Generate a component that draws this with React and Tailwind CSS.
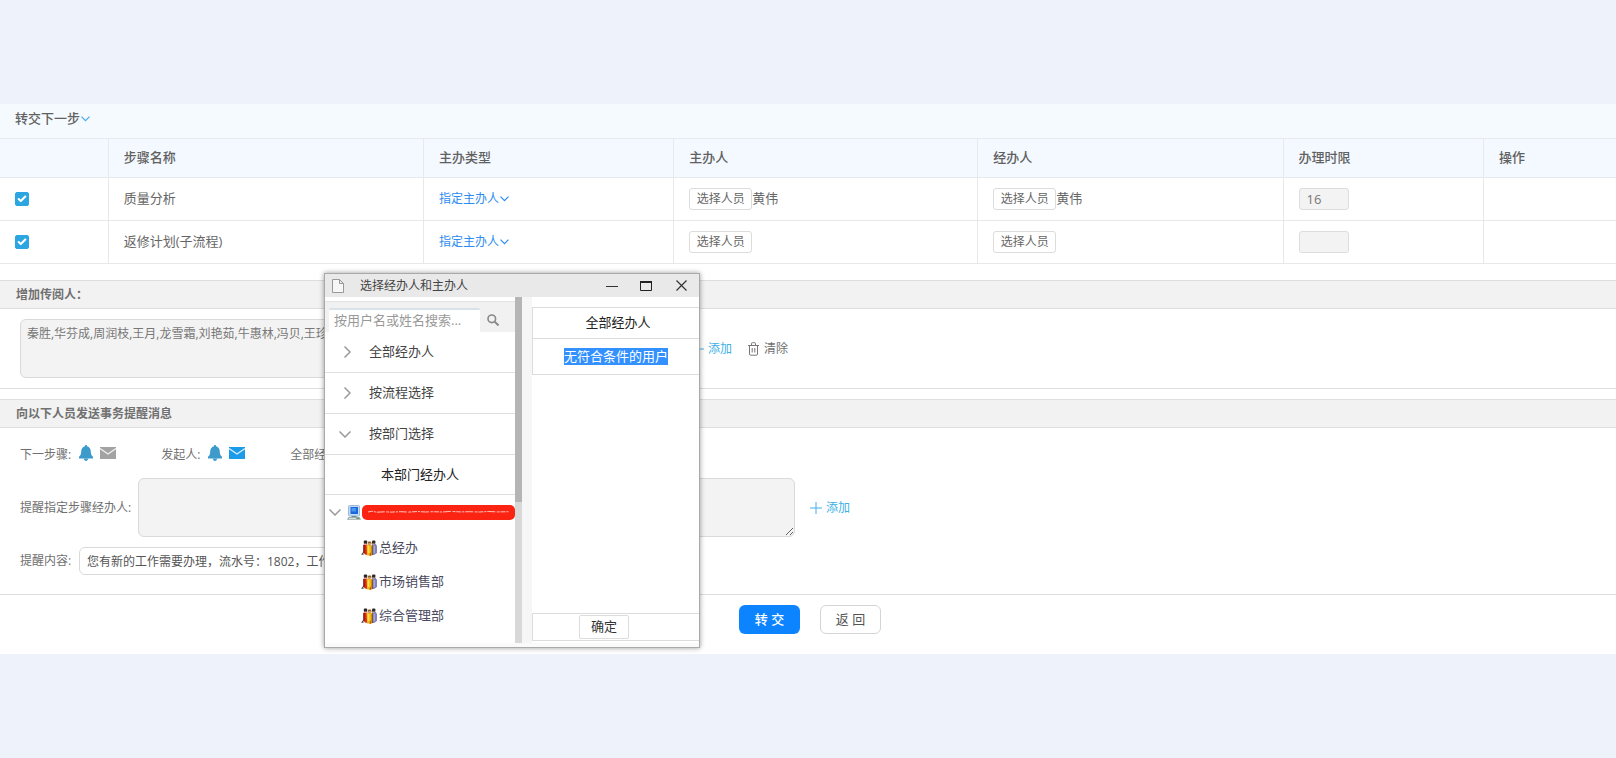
import React, { useState } from 'react'
import { Check } from 'lucide-react'

const STEPS = [
    { id: 1, name: '质量分析', host: '黄伟', handler: '黄伟', limit: '16' },
    { id: 2, name: '返修计划(子流程)', host: '', handler: '', limit: '' }
]

const READERS = '秦胜,华芬成,周润枝,王月,龙雪霜,刘艳茹,牛惠林,冯贝,王珍珍'

const DEPARTMENTS = ['总经办', '市场销售部', '综合管理部']

function CaretIcon() {
    return (
        <svg className="w-[9px] h-[6px] shrink-0" viewBox="0 0 9 6" fill="none" stroke="currentColor" strokeWidth="1.2">
            <path d="M.5.7l4 4 4-4" />
        </svg>
    )
}

function TreeArrow({ open }) {
    return open ? (
        <svg className="w-3 h-[7px] shrink-0" viewBox="0 0 12 7" fill="none" stroke="#999" strokeWidth="1.5">
            <path d="M.5.5l5.500 5.500 5.500-5.500" />
        </svg>
    ) : (
        <svg className="w-[7px] h-3 shrink-0" viewBox="0 0 7 12" fill="none" stroke="#999" strokeWidth="1.5">
            <path d="M.5.5l5.500 5.500-5.500 5.500" />
        </svg>
    )
}

function PlusIcon() {
    return (
        <svg className="w-3 h-3" viewBox="0 0 12 12" fill="none" stroke="currentColor">
            <path d="M0 6h12M6 0v12" />
        </svg>
    )
}

function SearchIcon() {
    return (
        <svg className="w-3 h-3" viewBox="0 0 12 12" fill="none" stroke="#888">
            <circle cx="4.800" cy="4.800" r="3.800" strokeWidth="1.600" />
            <path d="M7.600 7.600l3.900 3.900" strokeWidth="2" />
        </svg>
    )
}

function BellIcon() {
    return (
        <svg className="w-[14px] h-[16px]" viewBox="0 0 14 16" fill="#3d9bcb">
            <path d="M7 0c.7 0 1.100.5 1.100 1.200C10.600 1.900 11.700 4 11.800 6.500c.1 2.600.5 3.900 2.200 5.300v1.700H0v-1.700c1.700-1.400 2.100-2.700 2.200-5.300C2.300 4 3.400 1.900 5.900 1.200 5.900.5 6.300 0 7 0z" />
            <path d="M4.800 13.500h4.400c-.2 1.500-1 2.500-2.200 2.500s-2-1-2.200-2.500z" />
        </svg>
    )
}

function MailIcon({ color }) {
    return (
        <svg className="w-4 h-3" viewBox="0 0 16 12">
            <rect width="16" height="12" fill={color} />
            <path d="M0 1.500l8 5.500 8-5.500" fill="none" stroke="#fff" strokeOpacity=".85" strokeWidth="1.300" />
        </svg>
    )
}

function TrashIcon() {
    return (
        <svg className="w-[11px] h-[14px]" viewBox="0 0 11 14" fill="none" stroke="#777" strokeWidth="1">
            <path d="M0 3.500h11M3.500 3.500v-2q0-.8.8-.8h2.400q.8 0 .8.800v2M1.500 3.500v8.500q0 1.200 1.200 1.200h5.600q1.200 0 1.200-1.200V3.500M4.200 6v4.500M6.800 6v4.500" />
        </svg>
    )
}

function FileIcon() {
    return (
        <svg className="w-3 h-[14px]" viewBox="0 0 12 14" fill="#f7f7f7" stroke="#999" strokeWidth="1">
            <path d="M.5.5h7l4 4v9H.5zM7.500.5v4h4" />
        </svg>
    )
}

function ComputerIcon() {
    return (
        <svg className="w-[14px] h-[15px] shrink-0" viewBox="0 0 14 15">
            <rect x="1.500" y=".5" width="11" height="10.500" rx="1" fill="#c3dcf3" stroke="#9db9d6" />
            <rect x="3.500" y="2" width="7.500" height="7" fill="#1c66dc" />
            <path d="M4.500 3h4.500v3.500H4.500z" fill="#4a98f0" />
            <path d="M4.500 11h5v1.200h-5z" fill="#6f8797" />
            <path d="M1.500 12h11l1.500 2.800H0z" fill="#93a6a4" />
            <path d="M2 13.400h7" stroke="#e3ece8" />
            <path d="M10 13.400h2" stroke="#5aa04f" />
        </svg>
    )
}

function PeopleIcon() {
    return (
        <svg className="w-4 h-4 shrink-0" viewBox="0 0 16 16">
            <path d="M0 14.500l2.500-3V15z" fill="#555" />
            <path d="M2.500 4.500h4V15L4 14.500l-1.500-2z" fill="#d8261c" />
            <path d="M2.900 5v8" stroke="#5c100c" />
            <path d="M11 4h3.800l1.200 2v7L13 15h-2z" fill="#8480bd" />
            <path d="M13.200 6v7" stroke="#b9b5e6" />
            <path d="M5.500 5h6V15.500H6z" fill="#f9b514" />
            <path d="M7.500 6v7" stroke="#ffe44d" strokeWidth="1.500" />
            <path d="M8.500 16l.8-4 .9 3.500z" fill="#a8500f" />
            <path d="M11.200 5.500v9.500" stroke="#5b3a1c" />
            <rect x="2.800" y=".5" width="3.400" height="3.500" rx="1" fill="#2e2320" />
            <rect x="11" y=".5" width="3.400" height="3.500" rx="1" fill="#2e2a2a" />
            <rect x="6.800" y="1.500" width="3.600" height="3.500" rx="1.400" fill="#8c5a24" />
            <path d="M7.300 4h2.600" stroke="#f4c79b" strokeWidth="1.200" />
            <path d="M3.500 4h2M11.700 4h2" stroke="#e0b088" />
        </svg>
    )
}

function PickButton() {
    return (
        <button className="h-[22px] w-[63px] border border-[#dcdcdc] rounded-[3px] bg-white text-xs text-[#666]">
            选择人员
        </button>
    )
}

function AddButton() {
    return (
        <button className="flex items-center gap-1 ml-[15px] text-xs text-[#3db0e8]">
            <PlusIcon />
            添加
        </button>
    )
}

function SectionHeader({ children }) {
    return (
        <h2 className="h-[29px] flex items-center px-4 bg-[#f2f2f2] border-y border-[#dedede] text-xs font-bold text-[#707070]">
            {children}
        </h2>
    )
}

function RemindTarget({ label, mailColor }) {
    return (
        <div className="flex items-center gap-2">
            <span className="whitespace-nowrap">{label}</span>
            <span className="flex items-center gap-[7px] pb-1">
                <BellIcon />
                <MailIcon color={mailColor} />
            </span>
        </div>
    )
}

function StepTable() {
    const [checked, setChecked] = useState({ 1: true, 2: true })

    return (
        <table className="w-full table-fixed border-collapse text-[13px] text-[#666]">
            <colgroup>
                <col className="w-[6.7%]" />
                <col className="w-[19.5%]" />
                <col className="w-[15.5%]" />
                <col className="w-[18.8%]" />
                <col className="w-[18.9%]" />
                <col className="w-[12.4%]" />
                <col />
            </colgroup>
            <thead>
                <tr className="h-[39px] bg-[#f4f9ff] text-left border-y border-[#e6eaee]">
                    <th />
                    {['步骤名称', '主办类型', '主办人', '经办人', '办理时限', '操作'].map((title) => (
                        <th key={title} className="px-[15px] font-medium text-[#606060] border-l border-[#e6eaee]">{title}</th>
                    ))}
                </tr>
            </thead>
            <tbody>
                {STEPS.map((step) => (
                    <tr key={step.id} className="h-[43px] border-b border-[#e8e8e8]">
                        <td className="px-[15px]">
                            <label className="relative block w-[14px] h-[14px]">
                                <input
                                    type="checkbox"
                                    aria-label={step.name}
                                    className="appearance-none block w-[14px] h-[14px] rounded-[2px] border border-[#2ba6e0] checked:bg-[#2ba6e0]"
                                    checked={checked[step.id]}
                                    onChange={(e) => setChecked({ ...checked, [step.id]: e.target.checked })}
                                />
                                <Check className="absolute inset-0 m-auto w-[10px] h-[10px] text-white pointer-events-none" strokeWidth={5} />
                            </label>
                        </td>
                        <td className="px-[15px] border-l border-[#e8e8e8]">{step.name}</td>
                        <td className="px-[15px] border-l border-[#e8e8e8]">
                            <button className="flex items-center gap-px text-xs text-[#2d8cf0]">
                                指定主办人
                                <CaretIcon />
                            </button>
                        </td>
                        <td className="px-[15px] border-l border-[#e8e8e8]">
                            <div className="flex items-center">
                                <PickButton />
                                {step.host}
                            </div>
                        </td>
                        <td className="px-[15px] border-l border-[#e8e8e8]">
                            <div className="flex items-center">
                                <PickButton />
                                {step.handler}
                            </div>
                        </td>
                        <td className="px-[15px] border-l border-[#e8e8e8]">
                            <input
                                aria-label="办理时限"
                                className="block w-[50px] h-[22px] px-[7px] border border-[#dcdcdc] rounded-[3px] bg-[#f3f3f3] text-[13px] text-[#777]"
                                defaultValue={step.limit}
                                disabled
                            />
                        </td>
                        <td className="border-l border-[#e8e8e8]" />
                    </tr>
                ))}
            </tbody>
        </table>
    )
}

function TreeGroup({ label, open }) {
    return (
        <button className="w-full h-[41px] flex items-center gap-[18px] pl-[14px] border-b border-[#dfdfdf] text-[13px] text-[#444]">
            <span className="w-3 flex justify-end"><TreeArrow open={open} /></span>
            {label}
        </button>
    )
}

function PickerDialog() {
    return (
        <div
            role="dialog"
            aria-label="选择经办人和主办人"
            className="absolute left-[324px] top-[273px] w-[376px] h-[375px] flex flex-col bg-[#fafafa] border border-[#a9a9a9] shadow-[0_0_5px_rgba(0,0,0,0.4)]"
        >
            <div className="h-[23px] shrink-0 flex items-center bg-[#e9e9e9] pl-[7px] pr-3 text-xs text-[#444]">
                <FileIcon />
                <span className="ml-4 flex-1">选择经办人和主办人</span>
                <button aria-label="最小化" className="mr-[22px]">
                    <svg className="w-3 h-3" viewBox="0 0 12 12" fill="none" stroke="#333"><path d="M0 6.500h12" /></svg>
                </button>
                <button aria-label="最大化" className="mr-6">
                    <svg className="w-3 h-[10px]" viewBox="0 0 12 10" fill="none" stroke="#222">
                        <path d="M.5 1v8.500h11V1" />
                        <path d="M0 1h12" strokeWidth="2" />
                    </svg>
                </button>
                <button aria-label="关闭">
                    <svg className="w-[11px] h-[11px]" viewBox="0 0 11 11" fill="none" stroke="#333" strokeWidth="1.2">
                        <path d="M.5.5l10 10M10.500.5l-10 10" />
                    </svg>
                </button>
            </div>

            <div className="flex-1 min-h-0 flex mb-1">
                <div className="w-[190px] bg-white pt-1 overflow-hidden">
                    <div className="h-[31px] flex bg-[#f1f1f1] border-t border-[#e2e2e2] pl-1 pt-[6px]">
                        <input
                            aria-label="搜索用户"
                            className="w-[151px] h-6 px-[5px] pb-[2px] bg-white border-t-2 border-[#d9e2e7] rounded-t-[2px] text-[13px] placeholder:text-[#999]"
                            placeholder="按用户名或姓名搜索..."
                        />
                        <button aria-label="搜索" className="w-[26px] flex justify-center pt-[6px]">
                            <SearchIcon />
                        </button>
                    </div>
                    <TreeGroup label="全部经办人" />
                    <TreeGroup label="按流程选择" />
                    <TreeGroup label="按部门选择" open />
                    <div className="h-10 flex items-center justify-center border-b border-[#dfdfdf] text-[13px] text-[#222]">
                        本部门经办人
                    </div>
                    <div className="h-9 flex items-center pl-1 pb-[2px]">
                        <TreeArrow open />
                        <span className="ml-[6px]"><ComputerIcon /></span>
                        <span className="flex-1 h-[15px] ml-px rounded-[5px] bg-[#fb2412] flex items-center px-[6px]">
                            <svg className="w-full h-1" viewBox="0 0 142 4" preserveAspectRatio="none" fill="none" stroke="#ffc2ba">
                                <path d="M0 2l4-.8 5 1 8-.4 6 .3 10-.4 8 .4 9-.6 8 .5 7-.3 10 .3 8-.6 10 .5 9-.2 10 .3 9-.5 10 .4 11-.2" strokeDasharray="5 1 2 1 8 1.500 3 .8" />
                            </svg>
                        </span>
                    </div>
                    <ul className="text-[13px] text-[#4a4a5e]">
                        {DEPARTMENTS.map((name) => (
                            <li key={name} className="h-[34px] flex items-center gap-[2px] pl-9">
                                <PeopleIcon />
                                {name}
                            </li>
                        ))}
                    </ul>
                </div>
                <div className="w-[7px] bg-[#d8d8d8]">
                    <div className="h-[205px] bg-[#b5b5b5]" />
                </div>
                <div className="w-[10px] bg-[#f6f6f6]" />
                <div className="flex-1 flex flex-col pt-[10px] pb-[2px] bg-white">
                    <div className="border border-r-0 border-[#dcdcdc] text-[13px] text-center">
                        <div className="h-[31px] flex items-center justify-center pl-1 border-b border-[#dcdcdc] text-[#222]">全部经办人</div>
                        <div className="h-[35px] flex items-center justify-center">
                            <span className="bg-[#3390ff] text-white leading-[17px]">无符合条件的用户</span>
                        </div>
                    </div>
                    <div className="h-7 mt-auto flex items-center pl-[46px] border border-r-0 border-[#dcdcdc]">
                        <button className="w-[50px] h-6 bg-white border border-[#dcdcdc] rounded-[2px] text-[13px] text-[#333]">确定</button>
                    </div>
                </div>
            </div>
        </div>
    )
}

export default function App() {
    return (
        <div className="relative min-h-screen bg-[#edf2fb] pt-[104px] font-['Open_Sans','Noto_Sans_CJK_SC',sans-serif]">
            <main className="bg-white text-xs text-[#707070]">
                <button className="w-full h-[34px] flex items-center gap-px px-[15px] pb-1 bg-[#f5faff] text-[13px] font-medium text-[#606060]">
                    转交下一步
                    <span className="text-[#4aa8e8]"><CaretIcon /></span>
                </button>
                <StepTable />

                <section className="mt-4 border-b border-[#dedede]">
                    <SectionHeader>增加传阅人：</SectionHeader>
                    <div className="flex items-center px-5 py-[10px]">
                        <textarea
                            aria-label="传阅人"
                            className="block w-[657px] h-[59px] px-[6px] py-1 bg-[#f3f3f3] border border-[#d9d9d9] rounded-md text-[#777] leading-5"
                            defaultValue={READERS}
                            readOnly
                        />
                        <AddButton />
                        <button className="flex items-center gap-[5px] ml-4">
                            <TrashIcon />
                            清除
                        </button>
                    </div>
                </section>

                <section className="mt-[10px] border-b border-[#dedede]">
                    <SectionHeader>向以下人员发送事务提醒消息</SectionHeader>
                    <div className="px-5 pt-[13px] pb-[19px]">
                        <div className="flex h-7 gap-[45px]">
                            <RemindTarget label="下一步骤:" mailColor="#a3a3a3" />
                            <RemindTarget label="发起人:" mailColor="#1b9be8" />
                            <div className="flex items-center">全部经办人:</div>
                        </div>
                        <div className="flex items-center mt-[9px]">
                            <label htmlFor="remind-users" className="w-[118px]">提醒指定步骤经办人:</label>
                            <textarea
                                id="remind-users"
                                className="block w-[657px] h-[59px] bg-[#f3f3f3] border border-[#d9d9d9] rounded-md"
                                readOnly
                            />
                            <AddButton />
                        </div>
                        <div className="flex items-center mt-[10px]">
                            <label htmlFor="remind-text" className="w-[59px]">提醒内容:</label>
                            <input
                                id="remind-text"
                                className="w-[600px] h-7 px-[7px] bg-white border border-[#d9d9d9] rounded-md text-[#555]"
                                defaultValue="您有新的工作需要办理，流水号：1802，工作名称/文号"
                            />
                        </div>
                    </div>
                </section>

                <div className="flex justify-center gap-5 pl-1 pt-[10px] pb-5 text-[13px]">
                    <button className="w-[61px] h-[29px] rounded-md bg-[#0d84ff] text-white font-medium">转 交</button>
                    <button className="w-[61px] h-[29px] rounded-md bg-white border border-[#d4d4d4] text-[#555]">返 回</button>
                </div>
            </main>
            <PickerDialog />
        </div>
    )
}
